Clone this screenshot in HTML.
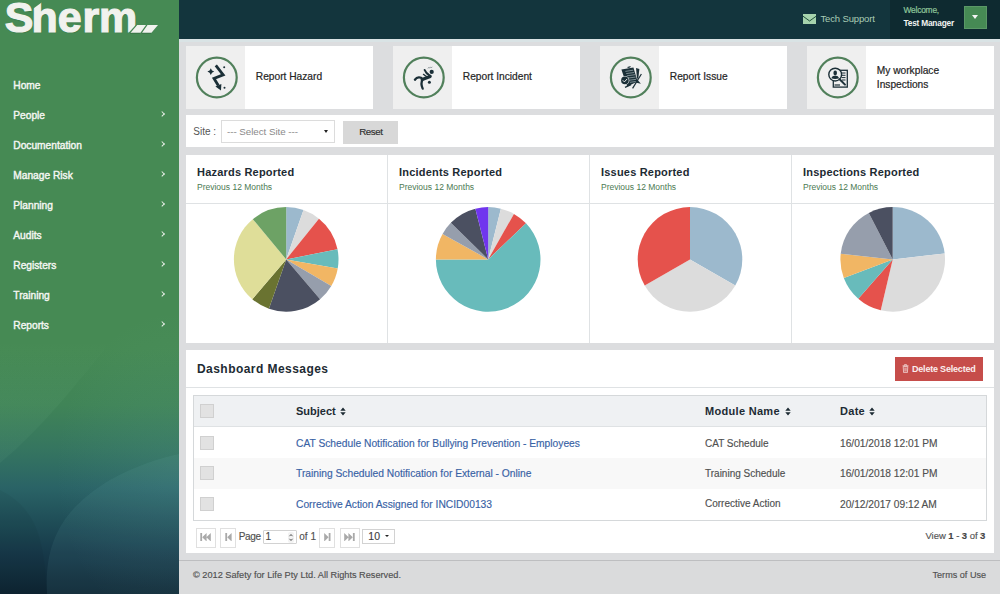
<!DOCTYPE html>
<html><head><meta charset="utf-8">
<style>
*{margin:0;padding:0;box-sizing:border-box}
html,body{width:1000px;height:594px;overflow:hidden;background:#dcdddf;font-family:"Liberation Sans",sans-serif;color:#333;line-height:1}
div,span,svg{position:absolute}
#side{left:0;top:0;width:179px;height:594px;background:radial-gradient(ellipse 120px 160px at 175px 470px,rgba(120,190,190,.10),rgba(120,190,190,0)),linear-gradient(180deg,#468a54 0px,#468a54 350px,#408457 405px,#357560 450px,#2a6366 488px,#1f4d57 522px,#173a4a 552px,#0e2533 594px)}
.lg{top:-4.3px;font:bold 43px "Liberation Sans",sans-serif;color:#f1f2ee;line-height:1;-webkit-text-stroke:1.2px #f1f2ee;text-shadow:0.5px 1px 1px rgba(0,40,10,.3)}
.nav{left:13.3px;font:10.2px "Liberation Sans",sans-serif;color:#f4f6f2;white-space:nowrap;-webkit-text-stroke:0.4px #f4f6f2}
.chev{left:160.3px;width:4.2px;height:4.2px;margin-top:0.8px;border-right:1.1px solid #e4ece4;border-top:1.1px solid #e4ece4;transform:rotate(45deg)}
#hdr{left:179px;top:0;width:821px;height:39px;background:#13353d}
#welc{left:890px;top:0;width:110px;height:39px;background:#0e2a30}
.card{top:46px;width:187px;height:63px;background:#fff}
.card .ic{left:0;top:0;width:59px;height:63px;background:#efefef}
.card .ring{left:10px;top:10.5px;width:41.5px;height:41.5px;border:2px solid #4b7d56;border-radius:50%}
.card .t{left:69.8px;top:26.2px;font-size:10.2px;color:#252525;white-space:nowrap;-webkit-text-stroke:0.2px #252525}
.panel{left:186px;width:808px;background:#fff}
.ct{font:bold 11px "Liberation Sans",sans-serif;letter-spacing:0.2px;color:#1d2b33;white-space:nowrap}
.cs{font-size:8.5px;color:#4b7a52;white-space:nowrap}
.vl{width:1px;background:#dfe2e4}
.hl{height:1px;background:#dfe2e4}
.cb{width:14px;height:14px;background:#e2e2e2;border:1px solid #d0d0d0}
.th{font:bold 11px "Liberation Sans",sans-serif;letter-spacing:0.3px;color:#1d2b33;white-space:nowrap}
.lk{font-size:10.25px;color:#3862a5;white-space:nowrap;-webkit-text-stroke:0.15px #3862a5}
.td{font-size:10px;color:#505050;white-space:nowrap;-webkit-text-stroke:0.15px #505050}
.pb{height:20px;border:1px solid #e0e0e0;background:#fff}
</style></head><body>
<div id="side"><svg style="left:0;top:340px" width="179" height="254" viewBox="0 0 179 254"><path d="M47 254 C44 205 60 170 110 140 C135 126 160 118 179 114 V254Z" fill="#8fd0d0" opacity="0.07"/><defs><linearGradient id="wg" x1="0" y1="0" x2="0" y2="1"><stop offset="0" stop-color="#a0e0b0" stop-opacity="0"/><stop offset="0.5" stop-color="#a0e0b0" stop-opacity="0.05"/><stop offset="1" stop-color="#a0e0b0" stop-opacity="0.05"/></linearGradient></defs><path d="M0 0 H112 C80 40 40 90 0 123Z" fill="url(#wg)"/><path d="M0 254 H47 C44 205 40 170 0 150Z" fill="#000" opacity="0.04"/></svg>
  <div class="lg" style="left:4.7px">S</div><div class="lg" style="left:31.4px">h</div><svg style="left:32px;top:0" width="12" height="12" viewBox="0 0 12 12"><path d="M0 0 H11 V1.6 L0 9.6Z" fill="#468a54"/></svg><div class="lg" style="left:57.8px">e</div><div class="lg" style="left:82.4px">r</div><div class="lg" style="left:98.9px">m</div><svg style="left:126px;top:24px" width="34" height="11" viewBox="0 0 34 11"><path d="M10.2 0.6 L12 0.6 L12 11 L0.6 11Z" fill="#468a54"/><g transform="translate(-0.7,0.7)" fill="#2e5e3a" opacity="0.75"><path d="M11.2 1 H20 L14.5 8.7 H4.5Z M21.5 1 H32 L25.5 8.7 H16Z"/></g><path d="M11.2 1 H20 L14.5 8.7 H4.5Z M21.5 1 H32 L25.5 8.7 H16Z" fill="#f1f2ee"/></svg>
  <div class="nav" style="top:79.7px">Home</div>
  <div class="nav" style="top:109.7px">People</div><div class="chev" style="top:111px"></div>
  <div class="nav" style="top:139.7px">Documentation</div><div class="chev" style="top:141px"></div>
  <div class="nav" style="top:169.7px">Manage Risk</div><div class="chev" style="top:171px"></div>
  <div class="nav" style="top:199.7px">Planning</div><div class="chev" style="top:201px"></div>
  <div class="nav" style="top:229.7px">Audits</div><div class="chev" style="top:231px"></div>
  <div class="nav" style="top:259.7px">Registers</div><div class="chev" style="top:261px"></div>
  <div class="nav" style="top:289.7px">Training</div><div class="chev" style="top:291px"></div>
  <div class="nav" style="top:319.7px">Reports</div><div class="chev" style="top:321px"></div>
</div>
<div id="hdr"></div><div style="left:179px;top:39px;width:821px;height:2.5px;background:#d9e3e5"></div>
<div id="welc"></div>
<svg style="left:803px;top:13.9px" width="13.2" height="10" viewBox="0 0 13.2 10"><rect x="0" y="0" width="13.2" height="10" fill="#a6d3ad"/><path d="M0 2.2 L6.6 7 L13.2 2.2" fill="none" stroke="#1e4f38" stroke-width="1"/></svg>
<div style="left:820.5px;top:13.5px;font-size:9.5px;letter-spacing:-0.15px;color:#a9cdb5;white-space:nowrap">Tech Support</div>
<div style="left:903.5px;top:6.3px;font-size:8.4px;letter-spacing:-0.2px;color:#8fc79a;white-space:nowrap;-webkit-text-stroke:0.2px #8fc79a">Welcome,</div>
<div style="left:903.5px;top:18.4px;font:bold 8.3px 'Liberation Sans',sans-serif;letter-spacing:-0.2px;color:#f2f4f2;white-space:nowrap">Test Manager</div>
<div style="left:964px;top:5.6px;width:23px;height:23px;background:#468a54;border:1px solid #5a9866"></div>
<div style="left:972px;top:15px;width:0;height:0;border-left:3.5px solid transparent;border-right:3.5px solid transparent;border-top:4px solid #f4f4f4"></div>

<div class="card" style="left:186px"><div class="ic"><svg style="left:4px;top:4px" width="55" height="55" viewBox="0 0 55 55"><circle cx="26.8" cy="27.5" r="19.9" fill="none" stroke="#51805b" stroke-width="2.2"/></svg><svg style="left:4px;top:4px" width="55" height="55" viewBox="0 0 55 55"><polyline points="25.8,15.3 33.2,24.8 24,28.5 28.3,35.6" fill="none" stroke="#1b2f37" stroke-width="2.8" stroke-linejoin="miter" stroke-miterlimit="6"/><polygon points="25.4,36.4 31.4,34 31,40.4" fill="#1b2f37"/><path d="M20.8 18.2 L22 20.4 L24.2 21.6 L22 22.8 L20.8 25 L19.6 22.8 L17.4 21.6 L19.6 20.4Z" fill="#1b2f37"/><circle cx="34.2" cy="17.3" r="1" fill="#1b2f37"/><circle cx="34.5" cy="37.8" r="1" fill="#1b2f37"/></svg></div><div class="t">Report Hazard</div></div>
<div class="card" style="left:393px"><div class="ic"><svg style="left:4px;top:4px" width="55" height="55" viewBox="0 0 55 55"><circle cx="26.8" cy="27.5" r="19.9" fill="none" stroke="#51805b" stroke-width="2.2"/></svg><svg style="left:4px;top:4px" width="55" height="55" viewBox="0 0 55 55"><circle cx="34.7" cy="21.9" r="2.1" fill="#1b2f37"/><circle cx="32.4" cy="32.2" r="1.5" fill="#1b2f37"/><path d="M17.9 29.7 C20 27 23.5 26.4 25.6 29.2 C24 32.2 24.3 35.5 25.7 38.6" fill="none" stroke="#1b2f37" stroke-width="2.3" stroke-linecap="round"/><path d="M25.2 29.6 L33.2 26.4" stroke="#1b2f37" stroke-width="3.2" stroke-linecap="round"/><path d="M27.6 19.9 C28.4 22.2 30.2 24 32.8 25.6" fill="none" stroke="#1b2f37" stroke-width="1.9" stroke-linecap="round"/><path d="M26.4 24.3 C27.8 25.6 29 26.4 30.6 27" fill="none" stroke="#1b2f37" stroke-width="1.2" stroke-linecap="round"/><path d="M30.9 18.5 l0.9 -1.2 l0.8 0.9 l0.9 -1.3 l0.9 0.9 l0.9 -1" fill="none" stroke="#5d6b70" stroke-width="0.6"/></svg></div><div class="t">Report Incident</div></div>
<div class="card" style="left:600px"><div class="ic"><svg style="left:4px;top:4px" width="55" height="55" viewBox="0 0 55 55"><circle cx="26.8" cy="27.5" r="19.9" fill="none" stroke="#51805b" stroke-width="2.2"/></svg><svg style="left:4px;top:4px" width="55" height="55" viewBox="0 0 55 55"><path d="M17.4 19.4 L29.4 17.6 L33.6 31.5 L23.2 36.6 Z" fill="#1b2f37"/><path d="M21.4 21.4 L29.2 20.2 M22.2 23.6 L30.2 22.5 M22.9 25.8 L31 24.7 M24.6 28 L31.7 27 M25.6 30.2 L32.2 29.3 M26 32.3 L32.6 31.4" stroke="#8d9ca2" stroke-width="0.85"/><path d="M23.3 16.9 L26.8 16.1 L26.2 17.6 L23.8 17.9Z" fill="#1b2f37"/><path d="M32 18 L35.4 19 L34.2 28.8 L33 28.6Z" fill="#1b2f37"/><path d="M37.4 24 L28.6 38.4" stroke="#1b2f37" stroke-width="1.2"/><path d="M32.6 28.8 L36.9 33.8 L31.5 32.5Z" fill="#1b2f37"/><path d="M21 37.4 L27 34.6" stroke="#1b2f37" stroke-width="1.3"/><circle cx="20.9" cy="30.4" r="4.5" fill="#eef0f0"/><circle cx="20.9" cy="30.4" r="3.8" fill="#1b2f37"/><path d="M18.8 30.3 L20.4 31.9 L23.2 28.9" fill="none" stroke="#eef0f0" stroke-width="1"/></svg></div><div class="t">Report Issue</div></div>
<div class="card" style="left:807px"><div class="ic"><svg style="left:4px;top:4px" width="55" height="55" viewBox="0 0 55 55"><circle cx="26.8" cy="27.5" r="19.9" fill="none" stroke="#51805b" stroke-width="2.2"/></svg><svg style="left:4px;top:4px" width="55" height="55" viewBox="0 0 55 55"><rect x="22.3" y="20.3" width="14" height="16.8" fill="none" stroke="#1b2f37" stroke-width="1.3"/><path d="M30 23 H34.5 M30.5 25.3 H34.5 M30.5 27.6 H34.5 M31 30 H34.5" stroke="#1b2f37" stroke-width="1"/><path d="M23.5 35 H29" stroke="#1b2f37" stroke-width="1.2"/><circle cx="24.2" cy="24.6" r="6.4" fill="#eef0f0" stroke="#1b2f37" stroke-width="1.4"/><ellipse cx="24.2" cy="22.9" rx="1.8" ry="2.3" fill="#1b2f37"/><path d="M20.2 28.3 Q21 25.6 24.2 25.4 Q27.4 25.6 28.2 28.3 Q24.2 29.6 20.2 28.3Z" fill="#1b2f37"/><path d="M28.6 29.2 L34 34.6" stroke="#1b2f37" stroke-width="2" stroke-linecap="round"/></svg></div><div class="t" style="line-height:13.5px;top:18.4px">My workplace<br>Inspections</div></div>

<!-- site bar -->
<div class="panel" style="top:115px;height:32px"></div>
<div style="left:193.3px;top:126.8px;font-size:10px;color:#555">Site :</div>
<div style="left:221px;top:120px;width:114px;height:23px;border:1px solid #dcdcdc;background:#fff"></div>
<div style="left:227px;top:126.8px;font-size:9.8px;color:#8a8a8a;letter-spacing:-0.05px">--- Select Site ---</div>
<div style="left:323.8px;top:129.6px;width:0;height:0;border-left:2.8px solid transparent;border-right:2.8px solid transparent;border-top:3.4px solid #222"></div>
<div style="left:343px;top:121px;width:55px;height:23px;background:#d8d8d8"></div>
<div style="left:359.3px;top:127.1px;font-size:9.8px;letter-spacing:-0.5px;color:#2e2e2e;-webkit-text-stroke:0.15px #2e2e2e">Reset</div>

<!-- charts -->
<div class="panel" style="top:155px;height:188px"></div>
<div class="hl" style="left:186px;top:203px;width:808px"></div>
<div class="vl" style="left:387px;top:155px;height:188px"></div>
<div class="vl" style="left:589px;top:155px;height:188px"></div>
<div class="vl" style="left:791px;top:155px;height:188px"></div>
<div class="ct" style="left:197px;top:165.6px">Hazards Reported</div>
<div class="cs" style="left:197px;top:182.8px">Previous 12 Months</div>
<div class="ct" style="left:399px;top:165.6px">Incidents Reported</div>
<div class="cs" style="left:399px;top:182.8px">Previous 12 Months</div>
<div class="ct" style="left:601px;top:165.6px">Issues Reported</div>
<div class="cs" style="left:601px;top:182.8px">Previous 12 Months</div>
<div class="ct" style="left:803px;top:165.6px">Inspections Reported</div>
<div class="cs" style="left:803px;top:182.8px">Previous 12 Months</div>
<!--PIES--><svg style="left:186px;top:204px" width="202" height="138" viewBox="0 0 202 138"><path d="M100.2 55.4L100.20 3.10A52.3 52.3 0 0 1 117.49 6.04Z" fill="#9cb9cd"/><path d="M100.2 55.4L117.49 6.04A52.3 52.3 0 0 1 132.97 14.64Z" fill="#dcdcdc"/><path d="M100.2 55.4L132.97 14.64A52.3 52.3 0 0 1 151.52 45.33Z" fill="#e5524c"/><path d="M100.2 55.4L151.52 45.33A52.3 52.3 0 0 1 151.72 64.39Z" fill="#68bbbb"/><path d="M100.2 55.4L151.72 64.39A52.3 52.3 0 0 1 145.26 81.94Z" fill="#f1b664"/><path d="M100.2 55.4L145.26 81.94A52.3 52.3 0 0 1 134.10 95.23Z" fill="#969eac"/><path d="M100.2 55.4L134.10 95.23A52.3 52.3 0 0 1 82.91 104.76Z" fill="#4b5061"/><path d="M100.2 55.4L82.91 104.76A52.3 52.3 0 0 1 66.30 95.23Z" fill="#6a7331"/><path d="M100.2 55.4L66.30 95.23A52.3 52.3 0 0 1 66.79 15.16Z" fill="#dfde99"/><path d="M100.2 55.4L66.79 15.16A52.3 52.3 0 0 1 100.20 3.10Z" fill="#6da265"/></svg>
<svg style="left:388px;top:204px" width="202" height="138" viewBox="0 0 202 138"><path d="M100.2 55.4L100.20 3.10A52.3 52.3 0 0 1 112.85 4.65Z" fill="#9cb9cd"/><path d="M100.2 55.4L112.85 4.65A52.3 52.3 0 0 1 125.95 9.88Z" fill="#dcdcdc"/><path d="M100.2 55.4L125.95 9.88A52.3 52.3 0 0 1 138.01 19.27Z" fill="#e5524c"/><path d="M100.2 55.4L138.01 19.27A52.3 52.3 0 1 1 47.90 55.40Z" fill="#68bbbb"/><path d="M100.2 55.4L47.90 55.40A52.3 52.3 0 0 1 54.55 29.88Z" fill="#f1b664"/><path d="M100.2 55.4L54.55 29.88A52.3 52.3 0 0 1 62.83 18.81Z" fill="#969eac"/><path d="M100.2 55.4L62.83 18.81A52.3 52.3 0 0 1 87.37 4.70Z" fill="#4b5061"/><path d="M100.2 55.4L87.37 4.70A52.3 52.3 0 0 1 100.20 3.10Z" fill="#7035ee"/></svg>
<svg style="left:590px;top:204px" width="202" height="138" viewBox="0 0 202 138"><path d="M100.0 55.4L100.00 3.10A52.3 52.3 0 0 1 145.29 81.55Z" fill="#9cb9cd"/><path d="M100.0 55.4L145.29 81.55A52.3 52.3 0 0 1 54.71 81.55Z" fill="#dcdcdc"/><path d="M100.0 55.4L54.71 81.55A52.3 52.3 0 0 1 100.00 3.10Z" fill="#e5524c"/></svg>
<svg style="left:792px;top:204px" width="202" height="138" viewBox="0 0 202 138"><path d="M100.7 55.4L100.70 3.10A52.3 52.3 0 0 1 152.65 49.39Z" fill="#9cb9cd"/><path d="M100.7 55.4L152.65 49.39A52.3 52.3 0 0 1 88.76 106.32Z" fill="#dcdcdc"/><path d="M100.7 55.4L88.76 106.32A52.3 52.3 0 0 1 66.25 94.75Z" fill="#e5524c"/><path d="M100.7 55.4L66.25 94.75A52.3 52.3 0 0 1 51.81 73.97Z" fill="#68bbbb"/><path d="M100.7 55.4L51.81 73.97A52.3 52.3 0 0 1 48.71 49.75Z" fill="#f1b664"/><path d="M100.7 55.4L48.71 49.75A52.3 52.3 0 0 1 76.79 8.88Z" fill="#969eac"/><path d="M100.7 55.4L76.79 8.88A52.3 52.3 0 0 1 100.70 3.10Z" fill="#4b5061"/></svg><!--/PIES-->

<!-- messages -->
<div class="panel" style="top:350px;height:203px"></div>
<div class="hl" style="left:186px;top:387px;width:808px"></div>
<div style="left:197px;font:bold 12px 'Liberation Sans',sans-serif;letter-spacing:0.45px;top:361.8px;color:#1d2b33">Dashboard Messages</div>
<div style="left:895px;top:357px;width:88px;height:23.5px;background:#c64d4a"></div>
<div style="left:912px;top:364px;font:bold 9px 'Liberation Sans',sans-serif;letter-spacing:-0.2px;color:#fbeeee;white-space:nowrap">Delete Selected</div><svg style="left:902px;top:363.5px" width="7" height="9" viewBox="0 0 7 9"><path d="M0.5 1.8 H6.5 M2.5 1.6 V0.6 H4.5 V1.6" fill="none" stroke="#f3d9d8" stroke-width="0.8"/><path d="M1.2 2.6 H5.8 L5.4 8.6 H1.6Z" fill="none" stroke="#f3d9d8" stroke-width="0.8"/><path d="M2.6 3.6 V7.6 M3.5 3.6 V7.6 M4.4 3.6 V7.6" stroke="#f3d9d8" stroke-width="0.5"/></svg>

<div style="left:193px;top:395px;width:794px;height:126px;border:1px solid #d5d8da;background:#fff"></div>
<div style="left:194px;top:396px;width:792px;height:31px;background:#eff1f3;border-bottom:1px solid #dfe2e4"></div>
<div style="left:194px;top:458px;width:792px;height:31px;background:#f8f8f8"></div>
<div class="cb" style="left:200px;top:404px"></div>
<div class="cb" style="left:200px;top:436px"></div>
<div class="cb" style="left:200px;top:466px"></div>
<div class="cb" style="left:200px;top:497px"></div>
<div class="th" style="left:296px;top:404.8px;letter-spacing:0">Subject</div><svg style="left:340px;top:406.8px" width="6" height="9" viewBox="0 0 6 9"><path d="M0.3 3.7 L3 0.4 L5.7 3.7Z M0.3 5.3 L3 8.6 L5.7 5.3Z" fill="#1d2b33"/></svg>
<div class="th" style="left:705px;top:404.8px">Module Name</div><svg style="left:784.5px;top:406.8px" width="6" height="9" viewBox="0 0 6 9"><path d="M0.3 3.7 L3 0.4 L5.7 3.7Z M0.3 5.3 L3 8.6 L5.7 5.3Z" fill="#1d2b33"/></svg>
<div class="th" style="left:840px;top:404.8px">Date</div><svg style="left:869px;top:406.8px" width="6" height="9" viewBox="0 0 6 9"><path d="M0.3 3.7 L3 0.4 L5.7 3.7Z M0.3 5.3 L3 8.6 L5.7 5.3Z" fill="#1d2b33"/></svg>
<div class="lk" style="left:296px;top:439px">CAT Schedule Notification for Bullying Prevention - Employees</div>
<div class="lk" style="left:296px;top:469px">Training Scheduled Notification for External - Online</div>
<div class="lk" style="left:296px;top:499.8px">Corrective Action Assigned for INCID00133</div>
<div class="td" style="left:705px;top:438.6px">CAT Schedule</div>
<div class="td" style="left:705px;top:468.6px">Training Schedule</div>
<div class="td" style="left:705px;top:499.4px">Corrective Action</div>
<div class="td" style="left:840px;top:438.5px;font-size:10.2px">16/01/2018 12:01 PM</div>
<div class="td" style="left:840px;top:468.5px;font-size:10.2px">16/01/2018 12:01 PM</div>
<div class="td" style="left:840px;top:499.5px;font-size:10.2px">20/12/2017 09:12 AM</div>

<!-- pager -->
<div class="pb" style="left:195.5px;top:528px;width:20.5px"></div>
<svg style="left:200px;top:532.5px" width="11" height="8.5" viewBox="0 0 11 8.5"><rect x="0.3" y="0" width="1.8" height="8.5" fill="#a9a9a9"/><path d="M2.2 4.25 L6.6 0 V8.5Z M6.4 4.25 L10.8 0 V8.5Z" fill="#a9a9a9"/></svg>
<div class="pb" style="left:220px;top:528px;width:16px"></div>
<svg style="left:224.5px;top:532.5px" width="7" height="8.5" viewBox="0 0 7 8.5"><rect x="0.3" y="0" width="1.8" height="8.5" fill="#a9a9a9"/><path d="M2.2 4.25 L6.6 0 V8.5Z" fill="#a9a9a9"/></svg>
<div class="td" style="left:238.8px;top:531.8px;letter-spacing:-0.4px">Page</div>
<div style="left:263px;top:530px;width:34px;height:14px;border:1px solid #d2d2d2;border-radius:1px"></div>
<div class="td" style="left:265.5px;top:532px;color:#444">1</div>
<svg style="left:288px;top:531.5px" width="6" height="11" viewBox="0 0 6 11"><rect x="0" y="0" width="6" height="11" rx="2" fill="#f3f3f3"/><path d="M1.5 4.2 L3 2.5 L4.5 4.2 M1.5 6.8 L3 8.5 L4.5 6.8" fill="none" stroke="#444" stroke-width="0.9"/></svg>
<div class="td" style="left:299.3px;top:531.8px">of 1</div>
<div class="pb" style="left:319px;top:528px;width:16px"></div>
<svg style="left:323.5px;top:532.5px" width="7" height="8.5" viewBox="0 0 7 8.5"><path d="M0.2 0 L4.6 4.25 L0.2 8.5Z" fill="#a9a9a9"/><rect x="4.7" y="0" width="1.8" height="8.5" fill="#a9a9a9"/></svg>
<div class="pb" style="left:339.5px;top:528px;width:20.5px"></div>
<svg style="left:344px;top:532.5px" width="11" height="8.5" viewBox="0 0 11 8.5"><path d="M0.2 0 L4.6 4.25 L0.2 8.5Z M4.4 0 L8.8 4.25 L4.4 8.5Z" fill="#a9a9a9"/><rect x="8.9" y="0" width="1.8" height="8.5" fill="#a9a9a9"/></svg>
<div style="left:362px;top:529px;width:33px;height:14.5px;border:1px solid #d2d2d2"></div>
<div class="td" style="left:368.3px;top:531.4px;color:#3a3a3a;font-size:10.5px">10</div>
<div style="left:385px;top:535px;width:0;height:0;border-left:2px solid transparent;border-right:2px solid transparent;border-top:2.5px solid #222"></div>
<div class="td" style="left:925.5px;top:530.5px;font-size:9.5px;color:#555;letter-spacing:-0.05px">View <b style="font-weight:bold;color:#444">1</b> - <b style="font-weight:bold;color:#444">3</b> of <b style="font-weight:bold;color:#444">3</b></div>

<!-- footer -->
<div style="left:179px;top:560px;width:821px;height:34px;background:#dadbdc;border-top:1px solid #bdbec0"></div>
<div style="left:193px;top:570.9px;font-size:9.2px;color:#505050;white-space:nowrap;-webkit-text-stroke:0.15px #505050">© 2012 Safety for Life Pty Ltd. All Rights Reserved.</div>
<div style="left:932.5px;top:570.9px;font-size:9.1px;color:#505050;white-space:nowrap;-webkit-text-stroke:0.15px #505050">Terms of Use</div>
</body></html>
